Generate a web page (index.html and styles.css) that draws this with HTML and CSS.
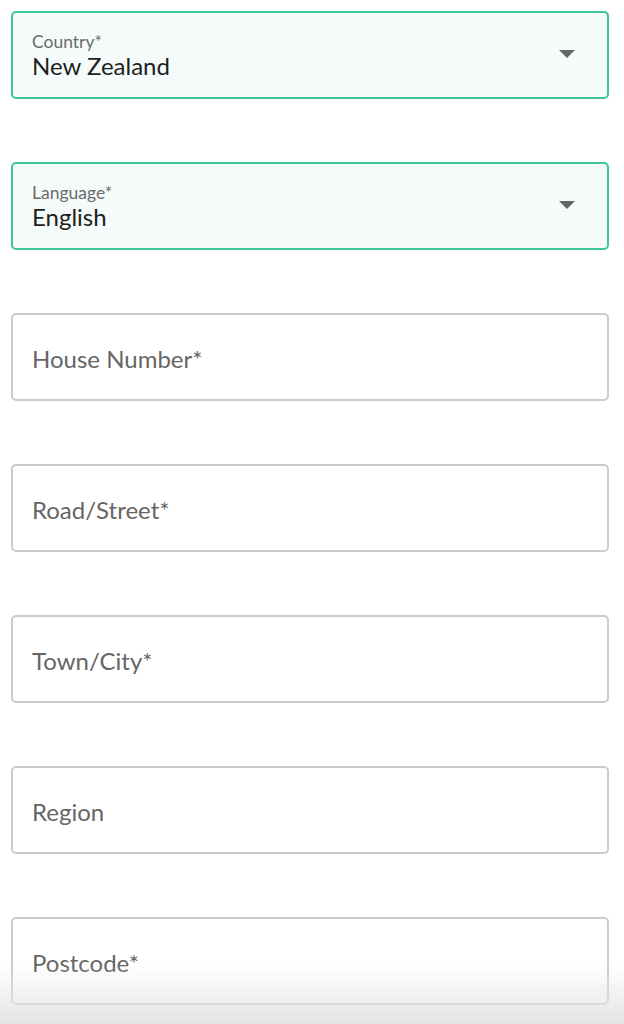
FILE: index.html
```html
<!DOCTYPE html>
<html lang="en">
<head>
    <meta charset="UTF-8">
    <meta name="viewport" content="width=device-width, initial-scale=1.0">
    <title>Address</title>
    <link rel="stylesheet" href="styles.css">
</head>
<body>
    <form class="address-form">
        <div class="field select">
            <div class="select-text">
                <span class="label">Country*</span>
                <span class="value">New Zealand</span>
            </div>
            <span class="arrow"></span>
        </div>

        <div class="field select">
            <div class="select-text">
                <span class="label">Language*</span>
                <span class="value">English</span>
            </div>
            <span class="arrow"></span>
        </div>

        <div class="field input"><span class="placeholder">House Number*</span></div>
        <div class="field input"><span class="placeholder">Road/Street*</span></div>
        <div class="field input"><span class="placeholder">Town/City*</span></div>
        <div class="field input"><span class="placeholder">Region</span></div>
        <div class="field input"><span class="placeholder">Postcode*</span></div>
    </form>

    <div class="bottom-fade"></div>
</body>
</html>
```

FILE: styles.css
```css
body {
    margin: 0;
    background: #ffffff;
    font-family: Lato, 'Open Sans', sans-serif;
    overflow: hidden;
    height: 100vh;
}

.address-form {
    display: flex;
    flex-direction: column;
    gap: 63px;
    padding: 11px 15px 0 11px;
}

.field {
    height: 88px;
    box-sizing: border-box;
    border-radius: 5px;
    display: flex;
    align-items: center;
    padding: 0 19px;
}

.select {
    border: 2px solid #3cc79b;
    background: #f4fbfa;
    justify-content: space-between;
}

.select-text {
    display: flex;
    flex-direction: column;
}

.label {
    font-size: 17.5px;
    color: #6b6b6b;
    line-height: 21px;
}

.value {
    font-size: 24px;
    color: #1e1e1e;
    line-height: 27px;
}

.arrow {
    width: 0;
    height: 0;
    border-left: 8px solid transparent;
    border-right: 8px solid transparent;
    border-top: 8px solid #666666;
    margin-right: 13px;
    margin-bottom: 2px;
}

.input {
    border: 2px solid #cccccc;
    background: #ffffff;
}

.placeholder {
    font-size: 24px;
    color: #666666;
    padding-top: 3px;
}

.bottom-fade {
    position: fixed;
    left: 0;
    right: 0;
    bottom: 0;
    height: 60px;
    background: linear-gradient(to bottom, rgba(230, 230, 230, 0), rgba(228, 228, 228, 1));
    pointer-events: none;
}
```
